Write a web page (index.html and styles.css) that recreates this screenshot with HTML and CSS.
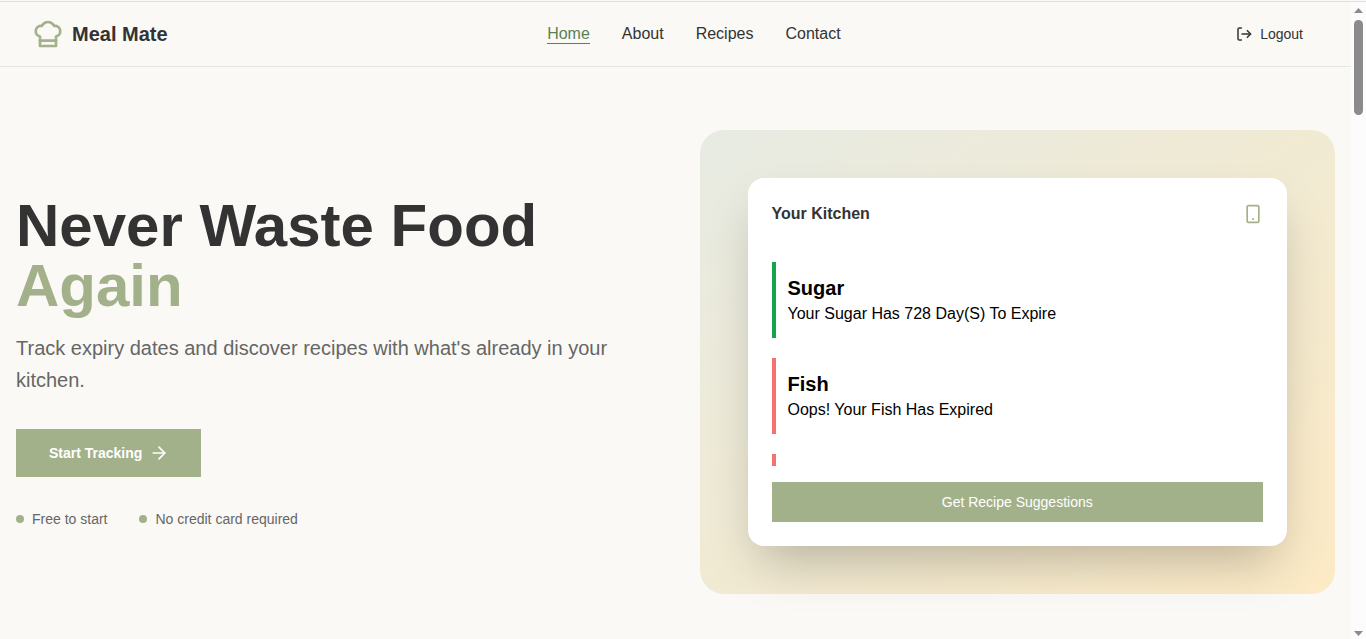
FILE: index.html
```html
<!DOCTYPE html>
<html lang="en">
<head>
<meta charset="utf-8">
<title>Meal Mate</title>
<link rel="stylesheet" href="styles.css">
</head>
<body>
<div class="window">
  <div class="page">
    <header class="nav">
      <a class="brand">
        <svg class="brand-icon" viewBox="0 0 24 24"><path d="M6 13.87A4 4 0 0 1 7.41 6a5.11 5.11 0 0 1 1.05-1.54 5 5 0 0 1 7.08 0A5.11 5.11 0 0 1 16.59 6 4 4 0 0 1 18 13.87V21H6Z"/><path d="M6 17h12"/></svg>
        <span>Meal Mate</span>
      </a>
      <nav class="links">
        <a class="link active">Home</a>
        <a class="link">About</a>
        <a class="link">Recipes</a>
        <a class="link">Contact</a>
      </nav>
      <a class="logout">
        <svg class="logout-icon" viewBox="0 0 24 24"><path d="M8 21H5a2 2 0 0 1-2-2V5a2 2 0 0 1 2-2h3"/><path d="m17 17 5-5-5-5"/><path d="M21 12H9"/></svg>
        <span>Logout</span>
      </a>
    </header>
    <main class="hero">
      <section class="intro">
        <h1 class="title">Never Waste Food <span class="accent">Again</span></h1>
        <p class="lead">Track expiry dates and discover recipes with what's already in your kitchen.</p>
        <button class="start"><span>Start Tracking</span>
          <svg class="arrow" viewBox="0 0 24 24"><path d="M5 12h14"/><path d="m12 5 7 7-7 7"/></svg>
        </button>
        <ul class="perks">
          <li class="perk">Free to start</li>
          <li class="perk">No credit card required</li>
        </ul>
      </section>
      <section class="panel">
        <div class="card">
          <div class="card-head">
            <h2 class="card-title">Your Kitchen</h2>
            <svg class="phone" viewBox="0 0 24 24"><rect x="5" y="2" width="14" height="20" rx="2"/><path class="phone-dot" d="M12 18h.01"/></svg>
          </div>
          <div class="items">
            <article class="item fresh"><h3 class="item-name">Sugar</h3><p class="item-text">Your Sugar Has 728 Day(S) To Expire</p></article>
            <article class="item expired"><h3 class="item-name">Fish</h3><p class="item-text">Oops! Your Fish Has Expired</p></article>
            <article class="item expired"></article>
          </div>
          <button class="suggest">Get Recipe Suggestions</button>
        </div>
      </section>
    </main>
  </div>
  <div class="scrollbar">
    <svg class="scroll-arrow" viewBox="0 0 9 5"><path d="M4.5 0 9 5H0Z"/></svg>
    <div class="thumb"></div>
    <svg class="scroll-arrow down" viewBox="0 0 9 5"><path d="M0 0h9L4.5 5Z"/></svg>
  </div>
</div>
</body>
</html>
```

FILE: styles.css
```css
* { box-sizing: border-box; margin: 0; padding: 0; }
body {
  font-family: "Liberation Sans", Arial, sans-serif;
  background: #faf9f6;
  color: #333;
  height: 639px;
  overflow: hidden;
  padding-top: 1px;
}
svg { fill: none; stroke: currentColor; stroke-width: 2; stroke-linecap: round; stroke-linejoin: round; flex: none; }
button { border: 0; font-family: inherit; color: #fff; background: #a3b18a; }
.window { display: flex; height: 638px; border-top: 1px solid #dfe1e0; }
.page { width: 1351px; }
.nav {
  display: flex;
  justify-content: space-between;
  align-items: center;
  height: 65px;
  padding: 0 32px;
  border-bottom: 1px solid #e5e5e2;
}
.brand { display: flex; align-items: center; gap: 8px; font-size: 20px; font-weight: 700; }
.brand-icon { width: 32px; height: 32px; color: #a3b18a; }
.links { display: flex; gap: 32px; }
.link { font-size: 16px; line-height: 18px; border-bottom: 1px solid transparent; }
.active { color: #588157; border-color: #588157; }
.logout { display: flex; align-items: center; gap: 8px; padding: 0 16px; font-size: 14px; }
.logout-icon { width: 16px; height: 16px; stroke-width: 2.25; }
.hero {
  display: grid;
  grid-template-columns: 1fr 1fr;
  gap: 48px;
  align-items: center;
  padding: 63px 16px 0;
}
.title { padding-top: 1px; font-size: 60px; line-height: 60px; }
.accent { display: block; color: #a3b18a; }
.lead { font-size: 20px; line-height: 32px; margin-top: 16px; color: #666; }
.start {
  display: flex;
  align-items: center;
  gap: 7px;
  width: 185px;
  height: 48px;
  margin-top: 33px;
  padding-left: 33px;
  font-size: 14px;
  font-weight: 700;
}
.arrow { width: 20px; height: 20px; }
.perks { display: flex; gap: 32px; margin-top: 32px; list-style: none; }
.perk { display: flex; align-items: center; gap: 8px; font-size: 14px; line-height: 20px; color: #666; }
.perk::before { content: ""; width: 8px; height: 8px; border-radius: 50%; background: #a3b18a; }
.panel {
  height: 464px;
  padding: 48px;
  border-radius: 24px;
  background: linear-gradient(to bottom right, #e7ebe3, #f1ead3 50%, #fdeac5);
}
.card {
  height: 368px;
  padding: 24px;
  border-radius: 16px;
  background: #fff;
  box-shadow: 0 25px 50px -12px rgba(0, 0, 0, 0.25);
}
.card-head { display: flex; justify-content: space-between; align-items: center; height: 24px; }
.card-title { font-size: 16px; line-height: 24px; }
.phone { width: 20px; height: 20px; color: #a3b18a; }
.phone-dot { stroke-width: 2.6; }
.items { display: flex; flex-direction: column; gap: 20px; height: 204px; margin-top: 36px; overflow: hidden; }
.item { flex: none; height: 76px; padding: 12px; border-left: 4px solid; color: #000; }
.fresh { border-color: #16a34a; }
.expired { border-color: #f87171; }
.item-name { font-size: 20px; line-height: 28px; }
.item-text { font-size: 16px; line-height: 24px; }
.suggest { display: block; width: 100%; height: 40px; margin-top: 16px; font-size: 14px; }
.scrollbar {
  display: flex;
  flex-direction: column;
  align-items: center;
  width: 15px;
  padding: 6px 0 3px;
  background: #fcfcfc;
}
.scroll-arrow { width: 9px; height: 5px; fill: #8b8b8b; stroke: none; }
.thumb { width: 9px; height: 95px; margin-top: 7px; border-radius: 5px; background: #8b8b8b; }
.down { margin-top: auto; }
```
